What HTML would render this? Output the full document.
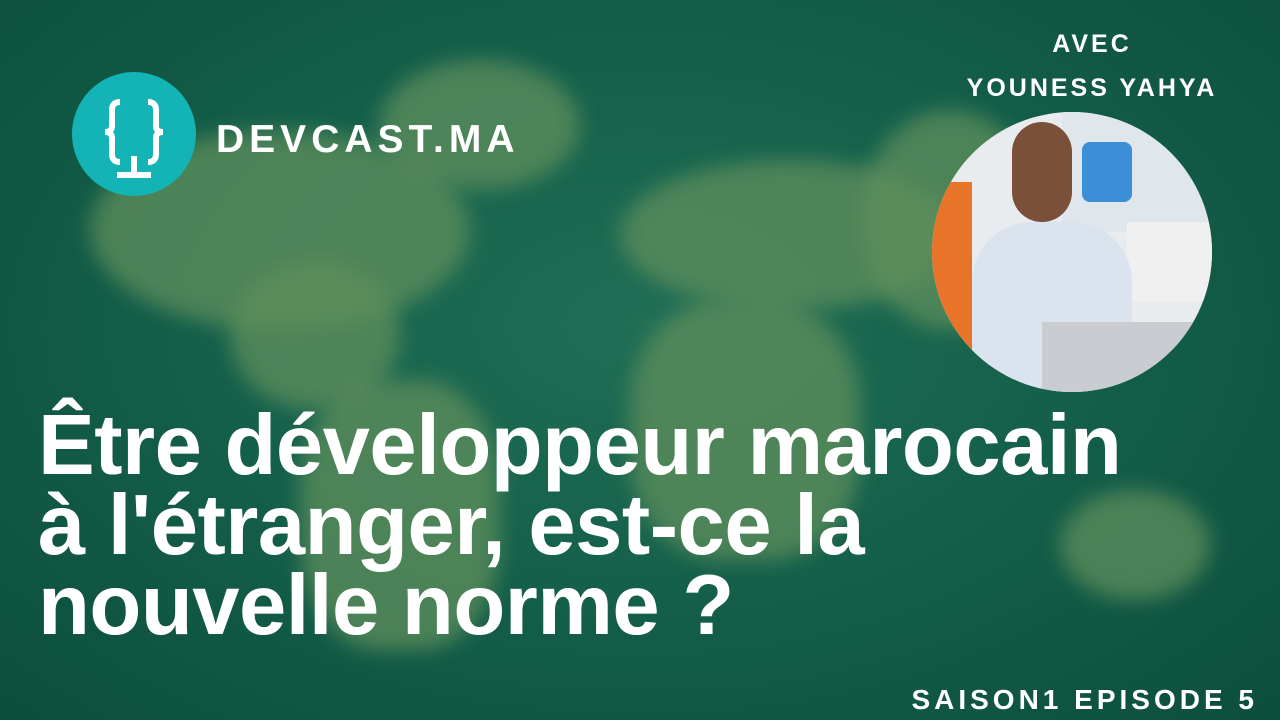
<!DOCTYPE html>
<html><head><meta charset="utf-8"><style>
html,body{margin:0;padding:0}
body{width:1280px;height:720px;overflow:hidden;position:relative;font-family:"Liberation Sans",sans-serif;
background:radial-gradient(ellipse at 50% 45%,#1f6e55 0%,#145f4a 50%,#0c4e3c 100%);}
.land{position:absolute;background:#5f8f5c;filter:blur(10px);opacity:.75;border-radius:50%}
.logo{position:absolute;left:72px;top:72px;width:124px;height:124px;border-radius:50%;background:#13b3b6}
.brand{position:absolute;left:216px;top:118px;color:#fff;font-weight:bold;font-size:39px;letter-spacing:5px}
.title{position:absolute;left:38px;top:406px;color:#fff;font-weight:bold;font-size:85px;line-height:80px;letter-spacing:-0.5px}
.avec{position:absolute;left:942px;width:300px;text-align:center;color:#fff;font-weight:bold;letter-spacing:3px;font-size:25px}
.ep{position:absolute;right:22px;top:684px;color:#fff;font-weight:bold;font-size:28px;letter-spacing:4px}
.photo{position:absolute;left:932px;top:112px;width:280px;height:280px;border-radius:50%;overflow:hidden;background:#e8ecef}
</style></head><body>
<div class="land" style="left:90px;top:130px;width:380px;height:200px"></div>
<div class="land" style="left:230px;top:260px;width:170px;height:150px"></div>
<div class="land" style="left:300px;top:380px;width:200px;height:270px;border-radius:40%"></div>
<div class="land" style="left:380px;top:60px;width:200px;height:130px"></div>
<div class="land" style="left:620px;top:160px;width:340px;height:150px"></div>
<div class="land" style="left:630px;top:300px;width:230px;height:260px;border-radius:40%"></div>
<div class="land" style="left:860px;top:110px;width:180px;height:220px"></div>
<div class="land" style="left:1060px;top:490px;width:150px;height:110px"></div>
<div class="logo"><svg width="124" height="124" viewBox="0 0 124 124"><g fill="none" stroke="#fff" stroke-width="6"><path d="M48 30q-8 0-8 8v16q0 6-7 6q7 0 7 6v16q0 8 8 8"/><path d="M76 30q8 0 8 8v16q0 6 7 6q-7 0-7 6v16q0 8-8 8"/><path d="M62 84v20M45 103h34"/></g></svg></div>
<div class="brand">DEVCAST.MA</div>
<div class="avec" style="top:30px">AVEC</div>
<div class="avec" style="top:74px">YOUNESS YAHYA</div>
<div class="photo">
<div style="position:absolute;left:0;top:70px;width:40px;height:220px;background:#e8742a"></div>
<div style="position:absolute;left:130px;top:0;width:150px;height:120px;background:#dfe6ec"></div>
<div style="position:absolute;left:150px;top:30px;width:50px;height:60px;background:#3c8fd6;border-radius:8px"></div>
<div style="position:absolute;left:195px;top:110px;width:85px;height:80px;background:#f0f0f0"></div>
<div style="position:absolute;left:40px;top:110px;width:160px;height:180px;background:#dbe3ef;border-radius:60px 60px 0 0"></div>
<div style="position:absolute;left:80px;top:10px;width:60px;height:100px;background:#7a5038;border-radius:30px"></div>
<div style="position:absolute;left:110px;top:210px;width:170px;height:80px;background:#c9cdd1"></div>
</div>
<div class="title">Être développeur marocain<br>à l'étranger, est-ce la<br>nouvelle norme ?</div>
<div class="ep">SAISON1 EPISODE 5</div>
</body></html>
